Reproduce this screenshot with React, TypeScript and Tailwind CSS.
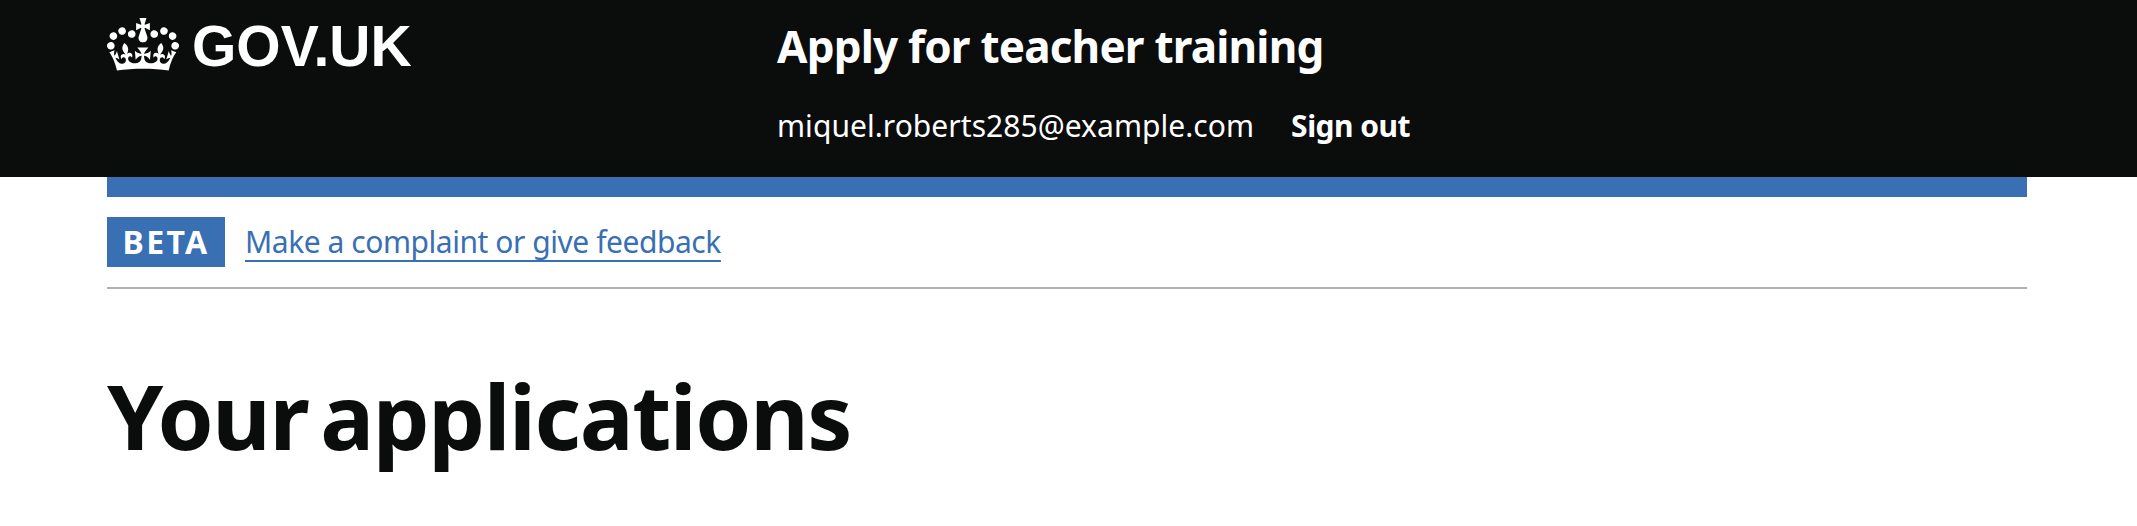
export default function App() {
  const font = { fontFamily: '"Noto Sans", "Liberation Sans", sans-serif' };
  return (
    <div style={font} className="min-h-[526px] bg-white overflow-hidden">
      <header className="bg-[#0b0c0c] h-[177px] text-white">
        <div className="ml-[107px] w-[1920px] flex">
          <a className="w-[670px] flex items-start pt-[18px] no-underline">
            <svg viewBox="0 0 132 97" className="w-[72px] h-[53px] fill-white shrink-0" aria-hidden="true">
              <path d="M25 30.2c3.5 1.5 7.7-.2 9.1-3.7 1.5-3.6-.2-7.8-3.9-9.2-3.6-1.4-7.6.3-9.1 3.9-1.4 3.5.3 7.5 3.9 9zM9 39.5c3.6 1.5 7.8-.2 9.2-3.7 1.5-3.6-.2-7.8-3.9-9.1-3.6-1.5-7.6.2-9.1 3.8-1.4 3.5.3 7.5 3.8 9zM4.4 57.2c3.5 1.5 7.7-.2 9.1-3.8 1.5-3.6-.2-7.7-3.9-9.1-3.5-1.5-7.6.3-9.1 3.8-1.4 3.5.3 7.6 3.9 9.1zm38.3-21.4c3.5 1.5 7.7-.2 9.1-3.8 1.5-3.6-.2-7.7-3.9-9.1-3.6-1.5-7.6.3-9.1 3.8-1.3 3.6.4 7.7 3.9 9.1zm64.4-5.6c-3.6 1.5-7.8-.2-9.1-3.7-1.5-3.6.2-7.8 3.8-9.2 3.6-1.4 7.7.3 9.2 3.9 1.3 3.5-.4 7.5-3.9 9zm15.9 9.3c-3.6 1.5-7.7-.2-9.1-3.7-1.5-3.6.2-7.8 3.7-9.1 3.6-1.5 7.7.2 9.2 3.8 1.5 3.5-.3 7.5-3.8 9zm4.7 17.7c-3.6 1.5-7.8-.2-9.2-3.8-1.5-3.6.2-7.7 3.9-9.1 3.6-1.5 7.7.3 9.2 3.8 1.3 3.5-.4 7.6-3.9 9.1zM89.3 35.8c-3.6 1.5-7.8-.2-9.2-3.8-1.4-3.6.2-7.7 3.9-9.1 3.6-1.5 7.7.3 9.2 3.8 1.4 3.6-.3 7.7-3.9 9.1zM69.7 17.7l8.9 4.7V9.3l-8.9 2.8c-.2-.3-.5-.6-.9-.9L72.4 0H59.6l3.5 11.2c-.3.3-.6.5-.9.9l-8.8-2.8v13.1l8.8-4.7c.3.3.6.7.9.9l-5 15.4v.1c-.2.8-.4 1.6-.4 2.4 0 4.1 3.1 7.5 7 8.1h.2c.3 0 .7.1 1 .1.4 0 .7 0 1-.1h.2c4-.6 7.1-4.1 7.1-8.1 0-.8-.1-1.7-.4-2.4V34l-5.1-15.4c.4-.2.7-.6 1-.9zM66 92.8c16.9 0 32.8 1.1 47.1 3.2 4-16.9 8.9-26.7 14-33.5l-9.6-3.4c1 4.9 1.1 7.2 0 10.2-1.5-1.4-3-4.3-4.2-8.7L108.6 76c2.8-2 5-3.2 7.5-3.3-4.4 9.4-10 11.9-13.6 11.2-4.3-.8-6.3-4.6-5.6-7.9 1-4.7 5.7-5.9 8-.5 4.3-8.7-3-11.4-7.6-8.8 7.1-7.2 7.9-13.5 2.1-21.1-8 6.1-8.1 12.3-4.5 20.8-4.7-5.4-12.1-2.5-9.5 6.2 3.4-5.2 7.9-2 7.2 3.1-.6 4.3-6.4 7.8-13.5 7.2-10.3-.9-10.9-8-11.2-13.8 2.5-.5 7.1 1.8 11 7.3L80.2 60c-4.1 4.4-8 5.3-12.3 5.4 1.4-4.4 8-11.6 8-11.6H55.5s6.4 7.2 7.9 11.6c-4.2-.1-8-1-12.3-5.4l1.4 16.4c3.9-5.5 8.5-7.7 10.9-7.3-.3 5.8-.9 12.8-11.1 13.8-7.2.6-12.9-2.9-13.5-7.2-.7-5 3.8-8.3 7.1-3.1 2.7-8.7-4.6-11.6-9.4-6.2 3.7-8.5 3.6-14.7-4.6-20.8-5.8 7.6-5 13.9 2.2 21.1-4.7-2.6-11.9.1-7.7 8.8 2.3-5.5 7.1-4.2 8.1.5.7 3.3-1.3 7.1-5.7 7.9-3.5.7-9-1.8-13.5-11.2 2.5.1 4.7 1.3 7.5 3.3l-4.7-15.4c-1.2 4.4-2.7 7.2-4.3 8.7-1.1-3-.9-5.3 0-10.2l-9.5 3.4c5 6.9 9.9 16.7 14 33.5 14.8-2.1 30.8-3.2 47.7-3.2z" />
            </svg>
            <span className="ml-[13px] text-[57px] leading-[58px] font-bold -mt-[1px]" style={{ fontFamily: '"Liberation Sans", sans-serif' }}>GOV.UK</span>
          </a>
          <div className="pt-[18px]">
            <div className="text-[44px] leading-[56px] font-bold tracking-[-0.8px]">Apply for teacher training</div>
            <div className="mt-[32px] flex items-center text-[30px] leading-[40px]">
              <span className="tracking-[0.05px]">miquel.roberts285@example.com</span>
              <a className="ml-[37px] font-bold tracking-[-0.5px]">Sign out</a>
            </div>
          </div>
        </div>
      </header>
      <main className="ml-[107px] w-[1920px]">
        <div className="h-[20px] bg-[#3870b3]" />
        <div className="h-[92px] border-b-2 border-[#b1b1b1] flex items-start pt-[20px]">
          <strong className="h-[50px] w-[118px] bg-[#3870b3] text-white text-[32px] leading-[50px] font-bold text-center tracking-[2.3px]">BETA</strong>
          <a className="ml-[20px] text-[#3870b3] text-[30px] leading-[50px] underline underline-offset-[7px] decoration-2 tracking-[-0.45px]">Make a complaint or give feedback</a>
        </div>
        <h1 className="mt-[71px] text-[90px] leading-[110px] font-bold text-[#0b0c0c] tracking-[-1.4px] [word-spacing:-10px]">Your applications</h1>
      </main>
    </div>
  );
}
